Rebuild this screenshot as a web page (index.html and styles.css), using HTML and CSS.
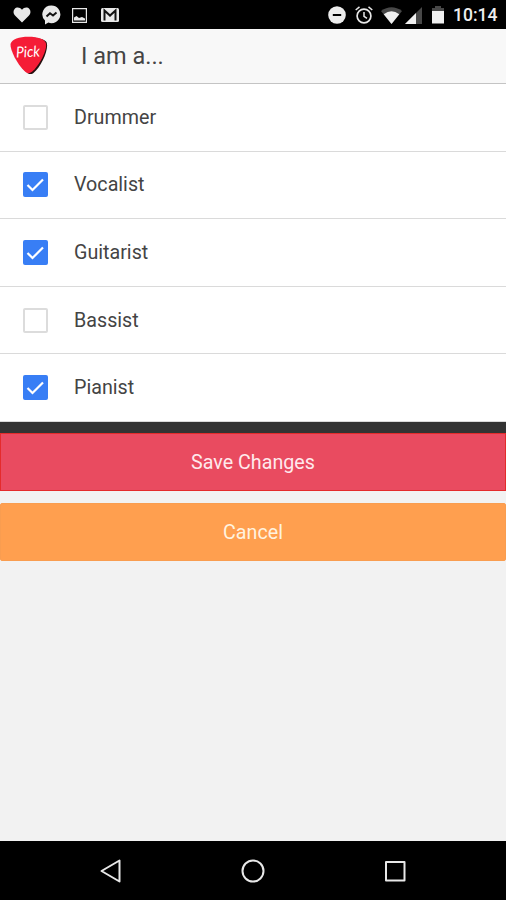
FILE: index.html
```html
<!DOCTYPE html>
<html lang="en">
<head>
<meta charset="utf-8">
<title>I am a...</title>
<link rel="stylesheet" href="styles.css">
</head>
<body>
<div class="screen">
  <div class="status">
    <div class="group">
      <svg width="18" height="16" viewBox="0 0 18 16"><path fill="#e8e8e8" d="M9 15.500 2 8.600C.2 6.600 0 4 1.600 2 3.400 0 6.800 0 9 2.800 11.200 0 14.600 0 16.400 2 18 4 17.800 6.600 16 8.600z"/></svg>
      <svg width="19" height="20" viewBox="0 0 19 20"><path fill="#e8e8e8" d="M9.500.5A9 8.800 0 0 0 3 15.500V19.500L6.400 17.600A9 8.800 0 1 0 9.500.5z"/><path d="M4.500 11.500 8 8.300 11 10.500 14.500 7.500" fill="none" stroke="#111" stroke-width="2"/></svg>
      <svg width="15" height="15" viewBox="0 0 15 15"><path fill="none" stroke="#e8e8e8" stroke-width="1.200" d="M.6.600h13.800v13.800H.6z"/><path fill="#e8e8e8" d="M2 12.500V9.500L4.500 8 7 10 10 9 13 10.500V12.500z"/></svg>
      <svg width="18" height="14" viewBox="0 0 18 14"><rect width="18" height="14" rx="1.500" fill="#e8e8e8"/><path d="M3.500 12.500V2.600L9 7.600 14.500 2.600V12.500" fill="none" stroke="#111" stroke-width="2"/></svg>
    </div>
    <div class="group right">
      <svg width="18" height="18" viewBox="0 0 18 18"><circle cx="9" cy="9" r="8.800" fill="#ececec"/><path stroke="#000" stroke-width="2" d="M4.800 9h8.400"/></svg>
      <svg class="alarm" width="18" height="18" viewBox="0 0 18 18"><g fill="none" stroke="#e8e8e8"><circle cx="9" cy="10" r="6.900" stroke-width="1.700"/><path stroke-width="1.500" d="M9 6v4.300l3 2M.7 4 4.500.9M17.300 4 13.500.9"/></g></svg>
      <svg class="wifi" width="21" height="17" viewBox="0 0 21 17"><path fill="#484848" d="M0 4Q10.500-3.500 21 4L10.500 17z"/><path fill="#f0f0f0" d="M2.700 7.300Q10.500 1.300 18.300 7.300L10.500 17z"/></svg>
      <svg class="cell" width="17" height="17" viewBox="0 0 17 17"><path fill="#484848" d="M17 0v17H0z"/><path fill="#f0f0f0" d="M11 6v11H0z"/></svg>
      <svg class="battery" width="12" height="18" viewBox="0 0 12 18"><path fill="#484848" d="M0 2h3V0h6v2h3v4H0z"/><path fill="#f0f0f0" d="M0 5h12v12.500H0z"/></svg>
      <span class="clock">10:14</span>
    </div>
  </div>
  <header class="header">
    <svg class="logo" width="39" height="39" viewBox="0 0 39 39"><path fill="#26100f" d="M3 6C8 0 32 0 36.500 6 39.500 13 31 31 24 36.500 22 38.500 19 38.500 17 36.500 9 30 1 14 3 6z"/><path fill="#f51c36" d="M.5 8C2 3 9 .8 18.500.8 28 .8 34.500 3 36 7.500 37.500 14 29 30 22 35.800 19.500 37.800 17.500 37.800 15 35.500 7 28 0 14 .5 8z"/><text class="logo-text" x="18" y="21" text-anchor="middle" textLength="24" lengthAdjust="spacingAndGlyphs" transform="rotate(-3 18 18)">Pick</text></svg>
    <h1>I am a...</h1>
  </header>
  <main class="list">
    <label class="row"><span class="box"></span>Drummer</label>
    <label class="row"><span class="box on"><svg width="25" height="25" viewBox="0 0 25 25"><path d="M4.500 13 9.500 18 20 7.500"/></svg></span>Vocalist</label>
    <label class="row"><span class="box on"><svg width="25" height="25" viewBox="0 0 25 25"><path d="M4.500 13 9.500 18 20 7.500"/></svg></span>Guitarist</label>
    <label class="row"><span class="box"></span>Bassist</label>
    <label class="row"><span class="box on"><svg width="25" height="25" viewBox="0 0 25 25"><path d="M4.500 13 9.500 18 20 7.500"/></svg></span>Pianist</label>
  </main>
  <div class="strip"></div>
  <button class="btn save">Save Changes</button>
  <button class="btn cancel">Cancel</button>
  <nav class="nav">
    <svg width="24" height="24" viewBox="0 0 24 24"><path d="M20.500 1.500v21L2.500 12z"/></svg>
    <svg width="24" height="24" viewBox="0 0 24 24"><circle cx="12" cy="12" r="10.500"/></svg>
    <svg width="24" height="24" viewBox="0 0 24 24"><path d="M3 3h18.500v18.500H3z"/></svg>
  </nav>
</div>
</body>
</html>
```
FILE: styles.css
```css
* { box-sizing: border-box; }
body { margin: 0; font-family: Roboto, sans-serif; color: #444; }
svg { display: block; flex: none; }
.screen { height: 900px; display: flex; flex-direction: column; background: #f2f2f2; overflow: hidden; }
.status { height: 29px; flex: none; background: #000; display: flex; justify-content: space-between; padding: 1px 9px 0 13px; }
.group { display: flex; align-items: center; gap: 11px; }
.group > svg:nth-child(4) { margin-left: 3px; }
.group.right { gap: 0; }
.group.right > .alarm { margin-left: 9px; }
.group.right > .wifi { margin-left: 8px; }
.group.right > .cell { margin-left: 3px; }
.group.right > .battery { margin-left: 10px; }
.clock { width: 44px; margin-left: 9px; color: #eee; font-size: 17.5px; font-weight: 500; line-height: 28px; white-space: nowrap; }
.header { height: 55px; flex: none; display: flex; align-items: center; padding: 0 0 1px 10px; background: #f8f8f8; border-bottom: 1px solid #c4c4c4; }
.header h1 { margin: 0 0 0 32px; font-size: 23.5px; line-height: 30px; font-weight: 400; }
.logo-text { font: italic 400 15px Lato, sans-serif; fill: #fff; }
.list { height: 338px; flex: none; display: grid; grid-template-rows: repeat(5, 1fr); background: #fff; }
.row { display: flex; align-items: center; padding: 0 0 0 23px; border-bottom: 1px solid #dadada; font-size: 19.7px; }
.box { width: 25px; height: 25px; margin-right: 26px; border: 2px solid #dcdcdc; border-radius: 2px; }
.box.on { border: 0; background: #387ef5; }
.box path { fill: none; stroke: #fff; stroke-width: 2.2; }
.strip { height: 11px; flex: none; background: #333; }
.btn { height: 58px; flex: none; width: 100%; margin: 0; padding: 0; border: 1px solid; border-radius: 2px; color: #fff; font: 19.7px Roboto, sans-serif; }
.save { background: #e94b60; border-color: #e42b2c; border-radius: 0; color: #ffe9ec; }
.cancel { margin-top: 12px; background: #ff9f4f; border-color: #f99d50; color: #fff2df; }
.nav { height: 59px; flex: none; margin-top: auto; background: #000; display: flex; justify-content: center; align-items: center; gap: 118px; }
.nav svg { fill: none; stroke: #e8e8e8; stroke-width: 2; stroke-linejoin: round; }
```
